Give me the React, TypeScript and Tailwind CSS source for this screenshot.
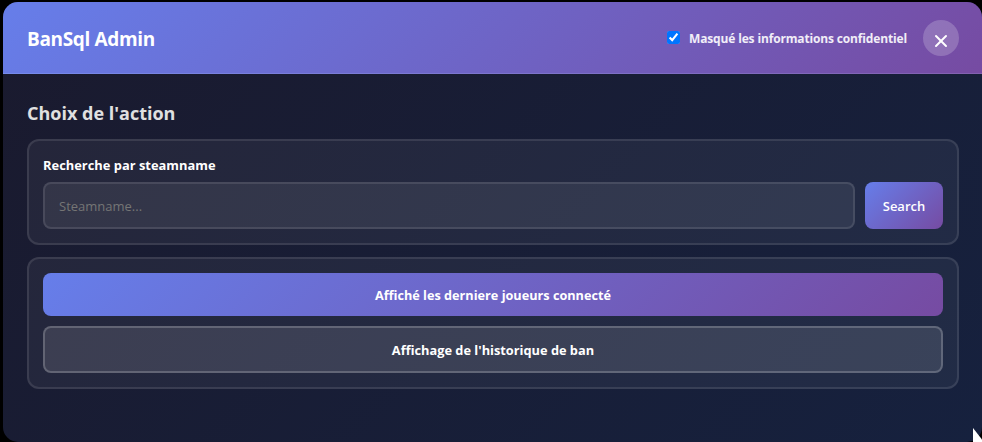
import { X } from "lucide-react";

const font = { fontFamily: '"Open Sans", "Noto Sans", sans-serif' };

const App: React.FC = () => {
  return (
    <div className="relative w-[982px] h-[442px] overflow-hidden bg-black pl-[3px] pt-[2px]" style={font}>
      <div className="w-[979px] h-[440px] rounded-[15px] overflow-hidden bg-[linear-gradient(135deg,#1a1a2e_0%,#16213e_100%)]">
        <header className="flex items-center justify-between h-[72px] pl-6 pr-[23px] border-b border-white/10 bg-[linear-gradient(135deg,#667eea_0%,#764ba2_100%)]">
          <h1 className="mt-1 text-[19px] font-bold tracking-[-0.35px] text-white">BanSql Admin</h1>
          <div className="flex items-center">
            <label className="flex items-center gap-[9px] text-[12px] font-bold text-white/90 tracking-[-0.15px]">
              <input type="checkbox" defaultChecked className="w-[13px] h-[13px] accent-[#0075ff]" />
              <span className="mt-0.5">Masqué les informations confidentiel</span>
            </label>
            <button className="flex items-center justify-center w-9 h-9 ml-4 rounded-full bg-white/20 text-white">
              <X size={20} strokeWidth={2.4} className="mt-1.5" />
            </button>
          </div>
        </header>
        <main className="pl-6 pr-[23px] pt-[26px]">
          <h2 className="text-[18px] leading-[26px] font-bold text-[#e0e0e0] mb-[13px]">Choix de l'action</h2>
          <section className="h-[106px] px-[14px] pt-[15px] rounded-xl border-2 border-white/10 bg-white/5 mb-3">
            <p className="text-[12.9px] leading-[18px] font-bold text-white mb-2">Recherche par steamname</p>
            <div className="flex gap-[10px]">
              <input
                placeholder="Steamname..."
                className="flex-1 h-[47px] px-[14px] rounded-lg border-2 border-white/10 bg-white/[0.07] text-[13px] placeholder:text-[#757575]"
              />
              <button className="w-[78px] h-[47px] pt-0.5 rounded-lg text-[13px] font-semibold text-white bg-[linear-gradient(135deg,#667eea_0%,#764ba2_100%)]">
                Search
              </button>
            </div>
          </section>
          <section className="flex flex-col gap-[10px] h-[132px] p-[14px] rounded-xl border-2 border-white/10 bg-white/5">
            <button className="h-[43px] pt-0.5 rounded-lg text-[12.7px] font-bold text-white bg-[linear-gradient(135deg,#667eea_0%,#764ba2_100%)]">
              Affiché les derniere joueurs connecté
            </button>
            <button className="h-[47px] pt-0.5 rounded-lg border-2 border-white/20 bg-white/[0.11] text-[12.8px] font-bold text-white">
              Affichage de l'historique de ban
            </button>
          </section>
        </main>
      </div>
      <svg className="absolute left-[972px] top-[427px]" width="12" height="16" viewBox="0 0 12 16">
        <path d="M1 1 L1 15 L12 15 Z" fill="#fff" />
      </svg>
    </div>
  );
};

export default App;
